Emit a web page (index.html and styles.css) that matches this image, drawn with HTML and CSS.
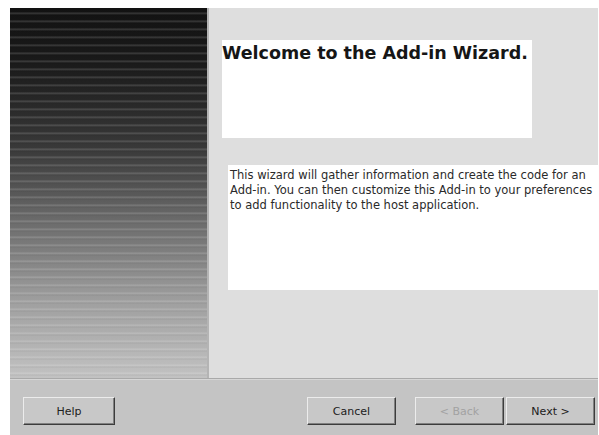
FILE: index.html
```html
<!DOCTYPE html>
<html lang="en">
<head>
<meta charset="utf-8">
<title>Add-in Wizard</title>
<link rel="stylesheet" href="styles.css">
</head>
<body>
<div class="dialog">
  <div class="main">
    <div class="banner"></div>
    <div class="content">
      <div class="title-box">
        <h1 class="title">Welcome to the Add-in Wizard.</h1>
      </div>
      <div class="desc-box">
        <p class="desc">This wizard will gather information and create the code for an<br>Add-in. You can then customize this Add-in to your preferences<br>to add functionality to the host application.</p>
      </div>
    </div>
  </div>
  <div class="footer">
    <button class="btn btn-help">Help</button>
    <div class="spacer"></div>
    <button class="btn btn-cancel">Cancel</button>
    <button class="btn btn-back" disabled>&lt; Back</button>
    <button class="btn btn-next">Next &gt;</button>
  </div>
</div>
</body>
</html>
```

FILE: styles.css
```css
html, body {
  margin: 0;
  padding: 0;
  background: #ffffff;
}

body {
  padding: 8px 1px 0 10px;
  font-family: "DejaVu Sans", sans-serif;
}

.dialog {
  width: 588px;
  height: 427px;
  display: flex;
  flex-direction: column;
  background: #c4c4c4;
  overflow: hidden;
}

.main {
  height: 370px;
  display: flex;
  border-bottom: 1px solid #a9a9a9;
  box-shadow: 0 1px 0 #d6d6d6;
}

/* striped gradient artwork down the left side */
.banner {
  width: 197px;
  flex: none;
  background:
    repeating-linear-gradient(to bottom,
      rgba(255,255,255,0) 0px,
      rgba(255,255,255,0) 4px,
      rgba(255,255,255,0.16) 5px,
      rgba(255,255,255,0.10) 6px,
      rgba(0,0,0,0.06) 7px,
      rgba(0,0,0,0) 8px),
    linear-gradient(to bottom, #121212 0%, #1a1a1a 15%, #393939 38%, #6c6c6c 58%, #a0a0a0 80%, #c2c2c2 100%);
  border-right: 2px solid #b4b4b4;
}

.content {
  flex: 1;
  min-width: 0;
  background: #dedede;
  padding: 32px 0 0 13px;
  display: flex;
  flex-direction: column;
}

.title-box {
  width: 310px;
  height: 98px;
  background: #ffffff;
}

.title {
  margin: 0;
  padding-top: 3px;
  font-family: "DejaVu Sans", sans-serif;
  font-weight: bold;
  font-size: 17.5px;
  letter-spacing: 0;
  white-space: nowrap;
  color: #161616;
}

.desc-box {
  margin: 27px 0 0 6px;
  height: 125px;
  width: 380px;
  background: #ffffff;
}

.desc {
  margin: 0;
  padding: 3px 0 0 2px;
  font-family: "DejaVu Sans", sans-serif;
  font-size: 11.5px;
  letter-spacing: 0;
  line-height: 15px;
  white-space: nowrap;
  color: #2a2a2a;
}

.footer {
  flex: 1;
  display: flex;
  align-items: flex-start;
  padding: 18px 3px 0 13px;
}

.spacer {
  flex: 1;
}

.btn {
  width: 89px;
  height: 28px;
  margin: 0;
  padding: 0;
  background: #c8c8c8;
  border: 1px solid;
  border-color: #ececec #3c3c3c #3c3c3c #ececec;
  box-shadow: inset -1px -1px 0 #808080;
  font-family: "DejaVu Sans", sans-serif;
  font-size: 11px;
  color: #202020;
}

.btn-help {
  width: 92px;
}

.btn-cancel {
  margin-right: 19px;
}

.btn-back {
  margin-right: 2px;
  color: #a2a2a2;
}
```
